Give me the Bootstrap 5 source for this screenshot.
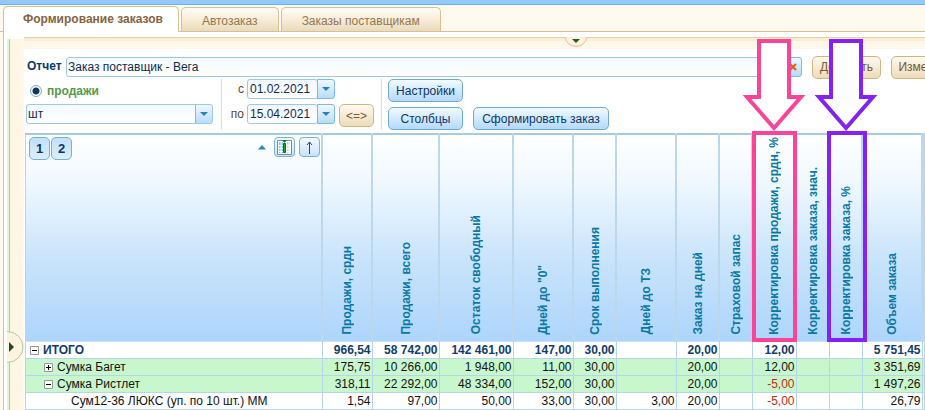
<!DOCTYPE html>
<html lang="ru">
<head>
<meta charset="utf-8">
<meta name="viewport" content="width=device-width, initial-scale=1">
<title>Формирование заказов</title>
<link href="https://cdn.jsdelivr.net/npm/bootstrap@5.3.0/dist/css/bootstrap.min.css" rel="stylesheet">
<style>
:root{--blue-line:#9cc8e4;--sand:#d9bf94;--navy:#0b3a68;--brown:#80643f}
body{font-family:"Liberation Sans",Arial,sans-serif;font-size:12px;line-height:16px;color:#222;background:#fffaee}
.app{min-height:100vh}
.top-strip{height:5px;background:#93c8fb;border-bottom:1px solid #6fb2ea}
.tabs-row{padding:2px 3px 0;gap:2px;border-bottom:1px solid var(--sand);height:27px}
.tab-btn{height:24px;border:1px solid var(--sand);border-bottom:0;border-radius:5px 5px 0 0;background:linear-gradient(#fffdf8,#f7ecd8 50%,#e9dabb);color:#947650;padding:2px 20px 0}
.tab-btn.on{height:26px;margin-bottom:-1px;background:#fff;color:#85643f;font-weight:700;padding:0 15px 1px 19px}
.frame{margin-left:3px;border-left:1px solid var(--sand);background:#fff;padding-top:5px}
.rail{width:20px;margin-top:2px;background:linear-gradient(90deg,#fff 3px,#dcf8d4 3px,#dcf8d4 5px,#a4d69c 5px,#a4d69c 6px,#fff4e0 6px,#fff7e9)}
.rail-knob{left:3px;top:292px;width:17px;height:32px}
.fold-strip{height:12px;border-top:1px solid #e8cfa0;background:linear-gradient(#fbeed8 3px,#fff8ea 3px)}
.fold-knob{left:541px;top:-1px;width:22px;height:10px}
.tools{margin-top:6px;padding-left:2px}
.report-row{height:24px;margin-right:-35px;gap:10px}
.report-row label{color:var(--navy);font-weight:700;width:40px;padding:0 0 2px 1px}
.fld{border:1px solid var(--blue-line);background:linear-gradient(#f2f9ff,#fff);color:#102c4c;border-radius:3px;padding:0 1px;height:20px;min-width:0}
.mini{border:1px solid #7fb9dd;background:linear-gradient(#eff8ff,#b8dcfa);width:18px;height:20px;border-radius:0 3px 3px 0;padding:0}
.btn-sand{border:1px solid #d6b57d;border-radius:5px;background:linear-gradient(#fffaf0,#f6ead4 50%,#ecdcbc);color:#755a36;line-height:16px;padding:0;height:23px;white-space:nowrap}
.w-act{width:69px}
.btn-sky{border:1px solid #6fabcf;border-radius:5px;background:linear-gradient(#f3faff,#d2e9fe 50%,#b4d9fb);color:#0d3763;line-height:16px;padding:0;height:23px;white-space:nowrap}
.w-set{width:75px}.w-make{width:136px}
.kind{width:196px;border-right:1px solid #ecdcc0;height:51px;padding-bottom:6px}
.kind label{color:#559a4b;font-weight:700}
.kind-radio{appearance:none;width:12px;height:12px;margin:0 5px 0 4px;border-radius:50%;border:1px solid #79aac8;background:radial-gradient(circle,#0d3763 0 3px,#fff 4px)}
.unit{width:187px;appearance:none;background:url("data:image/svg+xml,%3Csvg xmlns='http://www.w3.org/2000/svg' width='17' height='18'%3E%3Cdefs%3E%3ClinearGradient id='g' x2='0' y2='1'%3E%3Cstop stop-color='%23eff8ff'/%3E%3Cstop offset='1' stop-color='%23b8dcfa'/%3E%3C/linearGradient%3E%3C/defs%3E%3Cpath fill='url(%23g)' d='M0 0h17v18H0z'/%3E%3Cpath d='M.5 0v18' stroke='%237fb9dd'/%3E%3Cpath d='M5 7h8l-4 4z' fill='%23287fba'/%3E%3C/svg%3E") right center no-repeat,linear-gradient(#f2f9ff,#fff)}
.period{width:160px;border-right:1px solid #ecdcc0;height:51px;row-gap:5px}
.period label{width:22px;text-align:right;color:#59452c;padding-top:2px;margin-right:3px}
.date{width:71px;padding-left:2px}
.date+.mini{margin-left:-1px}
.swap{width:35px}
.acts{padding-left:6px}
.w-make{margin-left:10px}
.sheet{table-layout:fixed;width:calc(100% - 1px);margin:3px 0 0 1px;border-collapse:collapse}
.sheet th,.sheet td{border:1px solid #b5d5e8;padding:0 1px 0 2px;line-height:16px;height:17px;white-space:nowrap}
.sheet thead{background:linear-gradient(#fff,#eef7fe 25%,#c9e4fb 60%,#add5fb)}
.sheet thead th{height:207px;vertical-align:bottom;border-top:2px solid #a5cbe3;border-bottom-color:#c9e3f6;padding:0 0 6px;position:relative;border-right-width:2px;border-right-color:#bcd6ea}
.sheet thead th:first-child{vertical-align:top;padding:2px 1px 0 3px}
.vtext{writing-mode:vertical-rl;transform:rotate(180deg);color:#0978a4;line-height:14px;margin:0 auto;width:14px;display:block}
.lvl{width:21px;height:23px;border:1px solid #78b1d4;border-radius:5px;background:linear-gradient(#c1dffa,#dceefd);color:#0d3763;font-size:13px;font-weight:700;padding:0;margin-right:1px}
.tool-sq{width:21px;height:20px;border:1px solid #7bb3d2;border-radius:4px;background:linear-gradient(#f3faff,#c8e3fc);padding:0;color:#0d3763}
.grp td,.grp th{background:#c8f7cd}
.sheet tbody{color:#111}
.sheet tbody .total{color:#103c6b;font-weight:700}
.sheet tbody .neg{color:#c22b12}
.fold{width:9px;height:9px;border:0;padding:0;background:none;margin-right:4px;vertical-align:-1px;display:inline-flex}
.in0{padding-left:4px!important}.in1{padding-left:18px!important}.in2{padding-left:45px!important}
.box-hl{top:-4px;bottom:-1px;z-index:3;pointer-events:none}
.pinkbox{left:-1px;right:-2px;border:4px solid #fb4397}
.violetbox{left:-3px;right:-6px;border:4px solid #8421f5}
.arrow{bottom:calc(100% + 2px);left:50%;margin-left:-32px;width:62px;height:94px;overflow:visible}
</style>
<script src="https://cdn.jsdelivr.net/npm/bootstrap@5.3.0/dist/js/bootstrap.bundle.min.js"></script>
</head>
<body class="overflow-hidden">
<div class="app d-flex flex-column">
  <div class="top-strip"></div>
  <nav class="tabs-row d-flex align-items-end">
    <button class="tab-btn on" type="button">Формирование заказов</button>
    <button class="tab-btn" type="button">Автозаказ</button>
    <button class="tab-btn" type="button">Заказы поставщикам</button>
  </nav>
  <main class="frame d-flex flex-grow-1">
    <div class="rail position-relative flex-shrink-0">
      <svg class="rail-knob position-absolute" viewBox="0 0 17 32"><path d="M0 .5a16 15.500 0 0 1 0 31" fill="#fff3df" stroke="#a5cfa0"/><path d="M2 11l5 5-5 5z" fill="#1f4d18"/></svg>
    </div>
    <div class="flex-grow-1 position-relative">
      <div class="fold-strip position-relative"><svg class="fold-knob position-absolute" viewBox="0 0 22 10"><path d="M.5 0a10.500 9.500 0 0 0 21 0" fill="#fff3df" stroke="#dfc090"/><path d="M7 2h8l-4 4z" fill="#285a1c"/></svg></div>
      <form class="tools">
        <div class="report-row d-flex align-items-center">
          <div class="d-flex flex-grow-1 align-items-center">
            <label for="report">Отчет</label>
            <input id="report" class="fld flex-grow-1 rounded-end-0" value="Заказ поставщик - Вега">
            <button class="mini" type="button" aria-label="Очистить"><svg class="d-block m-auto" width="8" height="8"><path d="M1 1l6 6M7 1L1 7" stroke="#d8640e" stroke-width="2"/></svg></button>
          </div>
          <button class="btn-sand w-act" type="button">Добавить</button>
          <button class="btn-sand w-act" type="button">Изменить</button>
        </div>
        <div class="d-flex">
          <div class="kind d-flex flex-column justify-content-between">
            <div class="d-flex align-items-center pt-1"><input class="kind-radio" type="radio" id="sales" checked><label for="sales">продажи</label></div>
            <select class="fld unit" aria-label="Единица"><option>шт</option></select>
          </div>
          <div class="period d-flex flex-column">
            <div class="d-flex"><label for="d1">с</label><input id="d1" class="fld date" value="01.02.2021"><button class="mini" type="button" aria-label="Календарь"><svg class="d-block m-auto" width="8" height="5"><path d="M0 0h8L4 4z" fill="#287fba"/></svg></button></div>
            <div class="d-flex"><label for="d2">по</label><input id="d2" class="fld date" value="15.04.2021"><button class="mini" type="button" aria-label="Календарь"><svg class="d-block m-auto" width="8" height="5"><path d="M0 0h8L4 4z" fill="#287fba"/></svg></button><button class="btn-sand swap ms-1" type="button">&lt;=&gt;</button></div>
          </div>
          <div class="acts d-flex flex-column justify-content-between">
            <div><button class="btn-sky w-set" type="button">Настройки</button></div>
            <div class="d-flex"><button class="btn-sky w-set" type="button">Столбцы</button><button class="btn-sky w-make" type="button">Сформировать заказ</button></div>
          </div>
        </div>
      </form>
      <table class="sheet">
        <colgroup><col><col style="width:50px"><col style="width:67px"><col style="width:74px"><col style="width:60px"><col style="width:43px"><col style="width:60px"><col style="width:43px"><col style="width:33px"><col style="width:44px"><col style="width:33px"><col style="width:33px"><col style="width:60px"><col style="width:2px"></colgroup>
        <thead>
          <tr>
            <th scope="col"><div class="d-flex align-items-start">
              <button class="lvl" type="button">1</button><button class="lvl" type="button">2</button>
              <svg class="ms-auto mt-2 me-2" width="8" height="5"><path d="M0 4.500h8L4 0z" fill="#2f84c4"/></svg>
              <button class="tool-sq me-1" type="button" aria-label="Столбцы таблицы"><svg class="d-block m-auto" width="15" height="15"><path d="M.5.5h14v14H.5z" fill="#fff" stroke="#718e9d"/><path d="M2 2h4v11H2z" fill="#6ed2e8"/><path d="M10 2h3v11h-3z" fill="#c1e9bc"/><path d="M1 5.500h13M1 8.500h13M1 11.500h13M4 1v13M12 1v13" stroke="#fff"/><path d="M6.500 3.500h2v9h-2z" fill="#25a838" stroke="#0b6418"/><path d="M5 0h5L7.500 3z" fill="#16752a"/></svg></button>
              <button class="tool-sq" type="button" aria-label="Вверх"><svg class="d-block m-auto" width="9" height="13"><path d="M4.500 13V1M2 4l2.500-3L7 4" fill="none" stroke="#174d80"/></svg></button>
            </div></th>
            <th scope="col"><span class="vtext">Продажи, срдн</span></th>
            <th scope="col"><span class="vtext">Продажи, всего</span></th>
            <th scope="col"><span class="vtext">Остаток свободный</span></th>
            <th scope="col"><span class="vtext">Дней до "0"</span></th>
            <th scope="col"><span class="vtext">Срок выполнения</span></th>
            <th scope="col"><span class="vtext">Дней до ТЗ</span></th>
            <th scope="col"><span class="vtext">Заказ на дней</span></th>
            <th scope="col"><span class="vtext">Страховой запас</span></th>
            <th scope="col"><span class="vtext">Корректировка продажи, срдн, %</span><div class="box-hl pinkbox position-absolute"><svg class="arrow position-absolute" viewBox="0 0 62 94"><path d="M16 2h30v56h12L31 89 4 58h12z" fill="#fff" stroke="#fb4397" stroke-width="4"/></svg></div></th>
            <th scope="col"><span class="vtext">Корректировка заказа, знач.</span></th>
            <th scope="col"><span class="vtext">Корректировка заказа, %</span><div class="box-hl violetbox position-absolute"><svg class="arrow position-absolute" viewBox="0 0 62 94"><path d="M16 2h30v56h12L31 89 4 58h12z" fill="#fff" stroke="#8421f5" stroke-width="4"/></svg></div></th>
            <th scope="col"><span class="vtext">Объем заказа</span></th>
            <th></th>
          </tr>
        </thead>
        <tbody class="text-end">
          <tr class="total"><th scope="row" class="text-start in0"><button class="fold" type="button" aria-label="Свернуть"><svg width="9" height="9"><path d="M.5.5h8v8h-8z" fill="#fff" stroke="#999"/><path d="M2 4.500h5" stroke="#000"/></svg></button>ИТОГО</th><td>966,54</td><td>58 742,00</td><td>142 461,00</td><td>147,00</td><td>30,00</td><td></td><td>20,00</td><td></td><td>12,00</td><td></td><td></td><td>5 751,45</td><td></td></tr>
          <tr class="grp"><th scope="row" class="text-start fw-normal in1"><button class="fold" type="button" aria-label="Развернуть"><svg width="9" height="9"><path d="M.5.5h8v8h-8z" fill="#fff" stroke="#999"/><path d="M2 4.500h5M4.500 2v5" stroke="#000"/></svg></button>Сумка Багет</th><td>175,75</td><td>10 266,00</td><td>1 948,00</td><td>11,00</td><td>30,00</td><td></td><td>20,00</td><td></td><td>12,00</td><td></td><td></td><td>3 351,69</td><td></td></tr>
          <tr class="grp"><th scope="row" class="text-start fw-normal in1"><button class="fold" type="button" aria-label="Свернуть"><svg width="9" height="9"><path d="M.5.5h8v8h-8z" fill="#fff" stroke="#999"/><path d="M2 4.500h5" stroke="#000"/></svg></button>Сумка Ристлет</th><td>318,11</td><td>22 292,00</td><td>48 334,00</td><td>152,00</td><td>30,00</td><td></td><td>20,00</td><td></td><td class="neg">-5,00</td><td></td><td></td><td>1 497,26</td><td></td></tr>
          <tr><th scope="row" class="text-start fw-normal in2">Сум12-36 ЛЮКС (уп. по 10 шт.) ММ</th><td>1,54</td><td>97,00</td><td>50,00</td><td>33,00</td><td>30,00</td><td>3,00</td><td>20,00</td><td></td><td class="neg">-5,00</td><td></td><td></td><td>26,79</td><td></td></tr>
        </tbody>
      </table>
    </div>
  </main>
</div>
</body>
</html>
